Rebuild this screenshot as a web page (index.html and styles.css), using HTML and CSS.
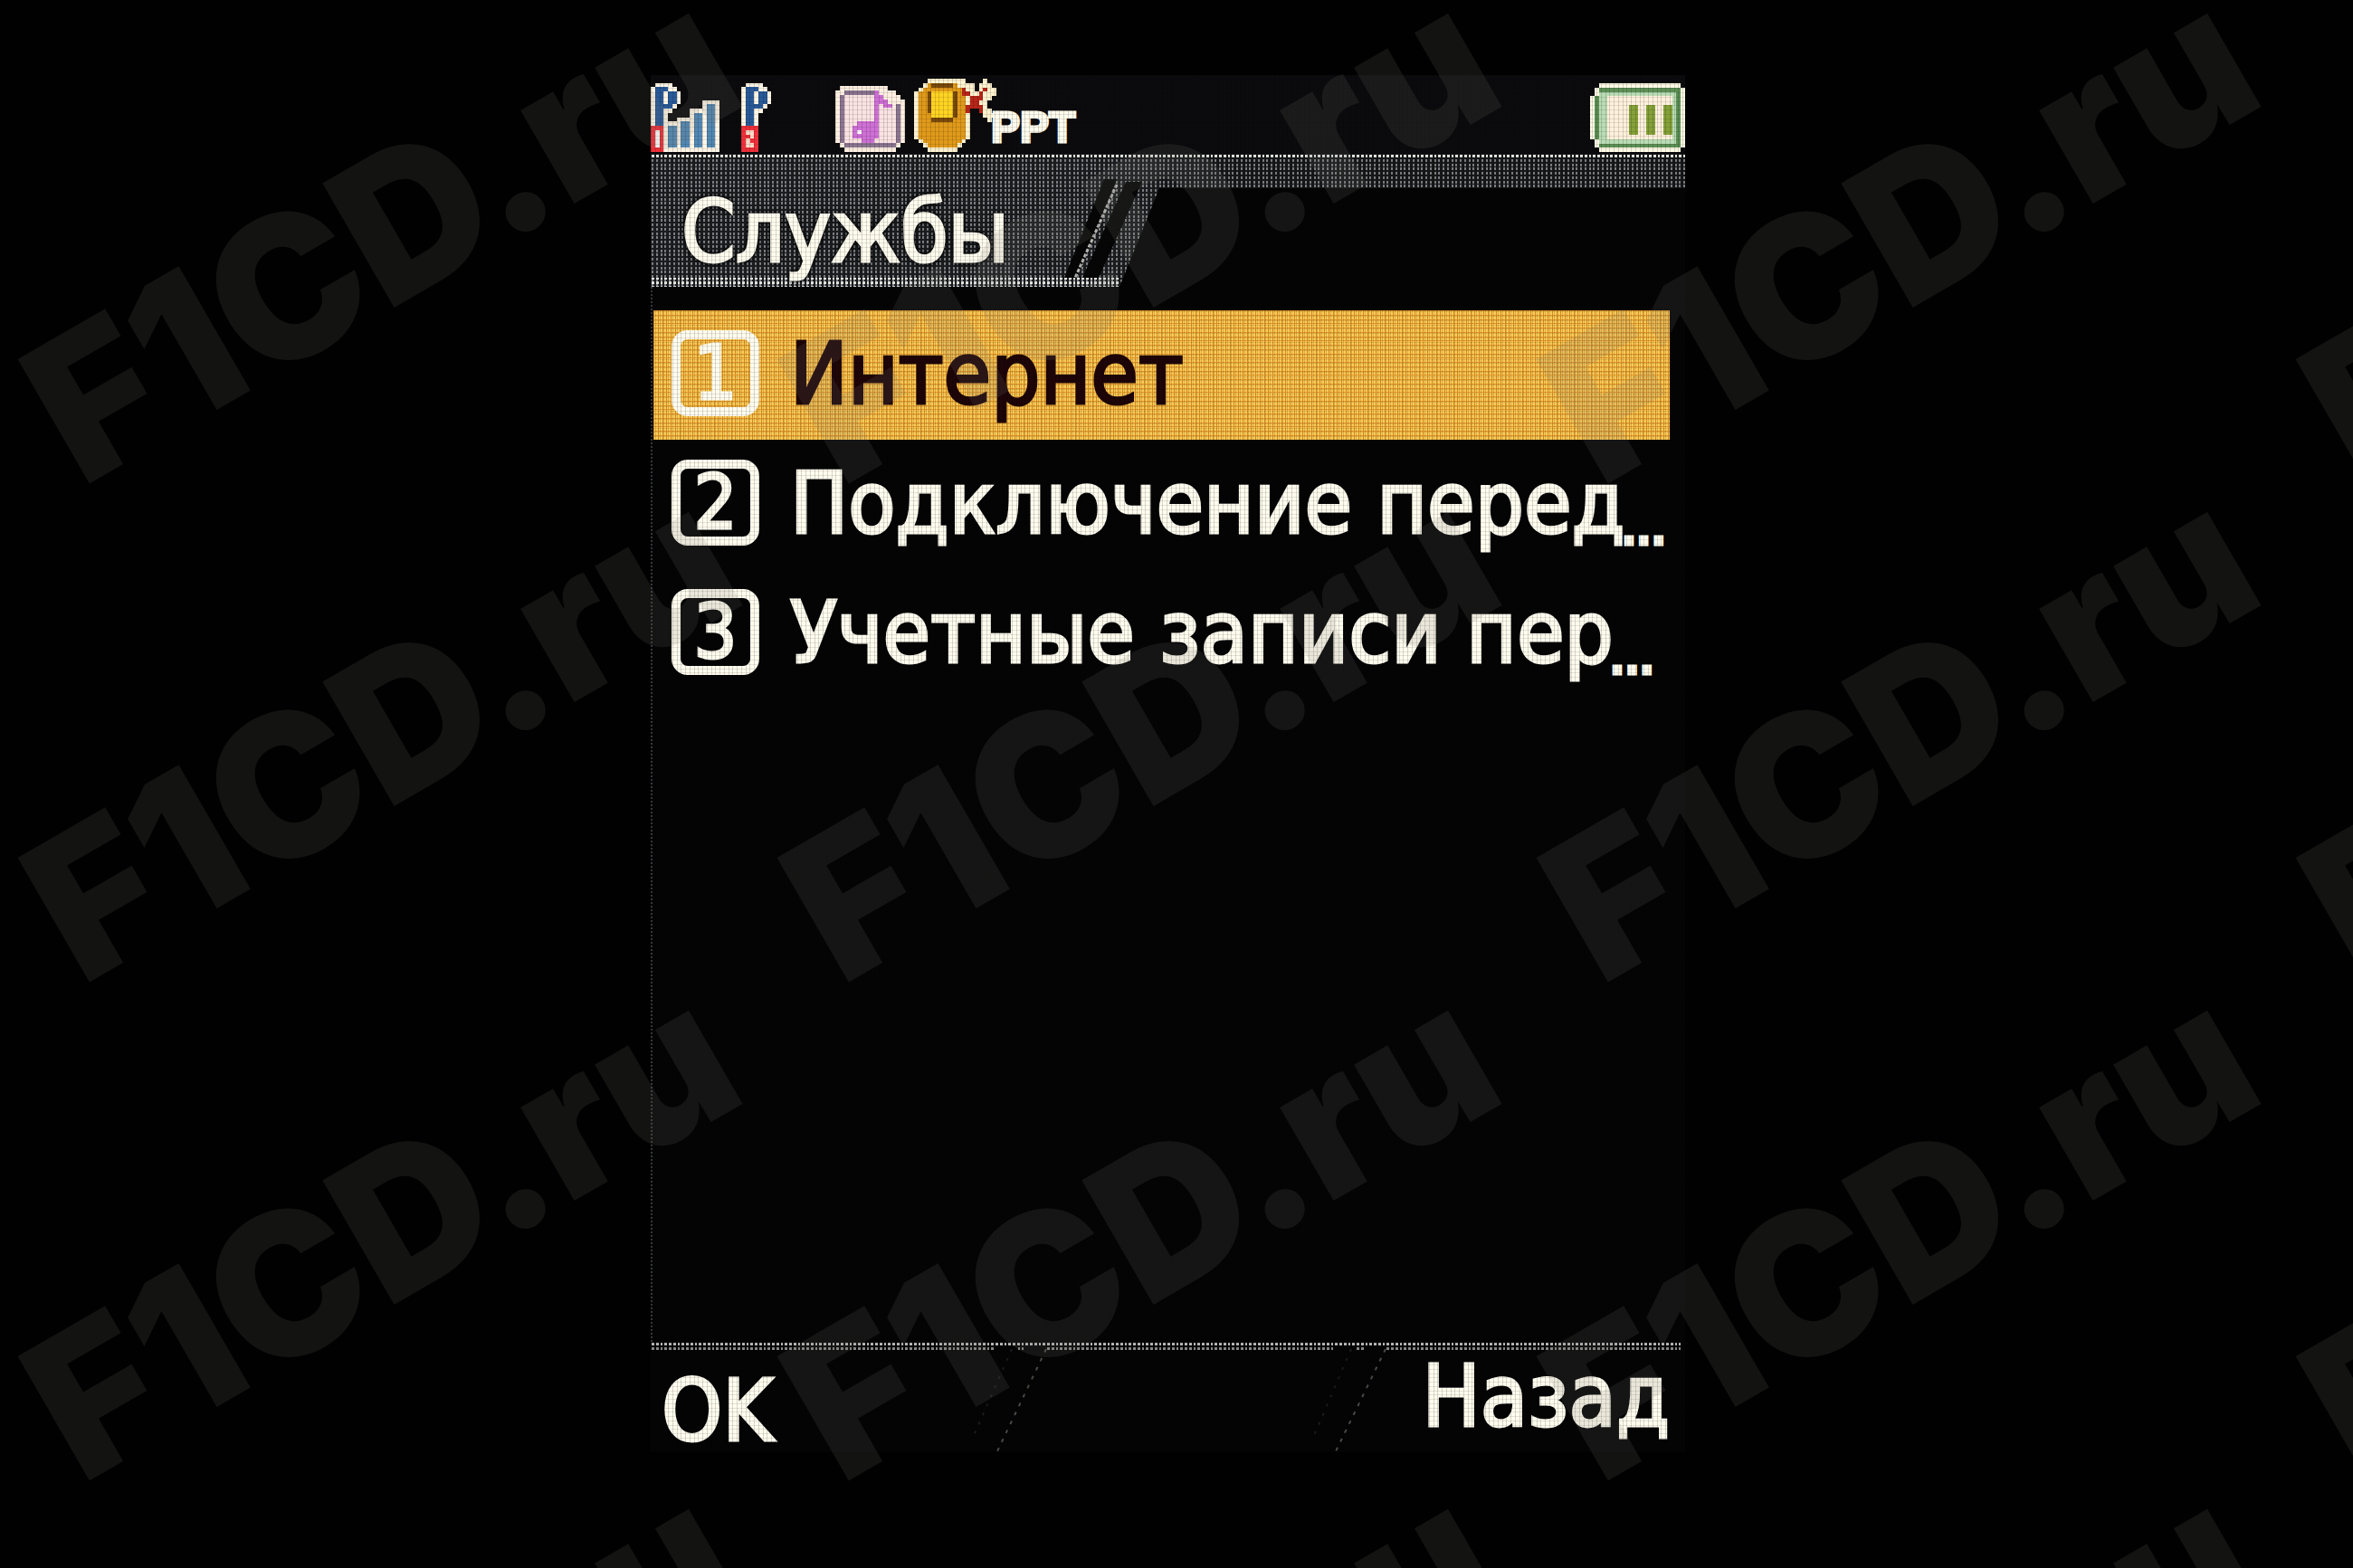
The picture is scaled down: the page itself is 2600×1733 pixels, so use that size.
FILE: index.html
```html
<!DOCTYPE html>
<html lang="ru">

<head>
  <meta charset="UTF-8">
  <meta name="viewport" content="width=device-width, initial-scale=1.0">
  <title>Службы</title>
  <link rel="stylesheet" href="styles.css">
</head>

<body>
  <main class="screen">
    <div class="status">
      <svg class="signal" viewBox="0 0 16 16" shape-rendering="crispEdges">
        <path fill="#fff6e6" d="M1 0h4v1h1v1h1v3h-1v1h-1v1h-1v3H0V1h1z" />
        <path fill="#2a5a98" d="M1 1h2v9H1zM3 1h1v1H3zM4 2h2v3H4zM3 5h2v1H3z" />
        <path fill="#fff6e6" d="M3 9h3V8h3V6h3V4h4v12H3z" />
        <path fill="#5288b4" d="M4 10h2v5H4zM7 9h2v6H7zM10 7h2v8h-2zM13 5h2v10h-2z" />
        <path fill="#f0303a" d="M0 10h3v6H0z" />
        <path fill="#fff" d="M1 11h1v4H1z" />
      </svg>
      <svg class="signal second" viewBox="0 0 16 16" shape-rendering="crispEdges">
        <path fill="#fff6e6" d="M1 0h4v1h1v1h1v3h-1v1h-1v1h-1v3H0V1h1z" />
        <path fill="#2a5a98" d="M1 1h2v9H1zM3 1h1v1H3zM4 2h2v3H4zM3 5h2v1H3z" />
        <path fill="#f0303a" d="M0 10h4v6H0z" />
        <path fill="#ffd9c8" d="M1 11h2v1H1zM2 12h1v1H2zM1 13h1v1H1zM1 14h2v1H1z" />
      </svg>
      <svg class="note" viewBox="0 0 16 15" shape-rendering="crispEdges">
        <path fill="#fff0e2" d="M1 0h11v1h2v1h1v1h1v10h-1v1h-1v1H2v-1H1v-1H0V1h1z" />
        <path fill="#8b7590" d="M2 1h8v1H2zM1 2h1v11H1zM2 13h12v1H2zM14 4h1v9h-1z" />
        <path fill="#fbe3e3" d="M2 2h9v11H2zM11 5h3v8h-3z" />
        <path fill="#cf70d6" d="M9 1h1v1h1v1h1v1h1v1h-2V4h-1v8H9v1H6v-1H4V9h1V8h4z" />
        <path fill="#fff" d="M5 10h1v1H5z" />
      </svg>
      <svg class="cam" viewBox="0 0 19 17" shape-rendering="crispEdges">
        <path fill="#fff3d0" d="M3 0h9v1h2v2h1V1h1V0h1v1h1v1h1v2h-1v1h-1v2h1v1h1v1h-1v1h-1V9h-1V8h-1V7h-2v7h-1v1h-1v1h-1v1H3v-1H2v-1H1v-1H0V3h1V2h1V1h1z" />
        <path fill="#e09a1a" d="M3 1h7v1h1v1h1v11h-1v1h-1v1H3v-1H2v-1H1V3h1V2h1z" />
        <path fill="#7a4a0a" d="M4 1h5v1H4zM3 3h1v5H3zM4 9h5v1H4zM9 3h1v6H9z" />
        <path fill="#ffd423" d="M4 3h5v6H4z" />
        <path fill="#b8261a" d="M11 2h1v1h1v1h2V3h1V2h1v1h-1v2h-1v1h1v2h-1V7h-2v1h-1V6h1V4h-2z" />
      </svg>
      <span class="ppt">PPT</span>
      <svg class="battery" viewBox="0 0 22 16" shape-rendering="crispEdges">
        <path fill="#fffbe6" d="M2 0h19v1h1v14h-1v1H2v-1H1v-2H0V3h1V1h1z" />
        <path fill="#5d8f56" d="M2 1h18v1H2zM1 3h1v10H1zM2 14h18v1H2zM20 1h1v14h-1z" />
        <path fill="#b9dcb4" d="M2 2h18v12H2z" />
        <path fill="#fff1dc" d="M4 3h15v10H4z" />
        <path fill="#84a038" d="M9 5h2v7H9zM13 5h2v7h-2zM17 5h2v7h-2z" />
      </svg>
    </div>

    <header class="title">
      <svg class="title-bg" aria-hidden="true">
        <defs>
          <pattern id="dots" width="19" height="19" patternUnits="userSpaceOnUse">
            <path fill="#a4a8ae" d="M1 1h2v3H1zM6 1h2v3H6zM11 1h2v3h-2zM15 1h2v3h-2zM1 6h2v3H1zM6 6h2v3H6zM11 6h2v3h-2zM15 6h2v3h-2zM1 11h2v3H1zM6 11h2v3H6zM11 11h2v3h-2zM15 11h2v3h-2zM1 15h2v3H1zM6 15h2v3H6zM11 15h2v3h-2zM15 15h2v3h-2z" />
          </pattern>
          <pattern id="line" width="19" height="5" patternUnits="userSpaceOnUse">
            <path fill="#e4e4e2" d="M1 1h3v3H1zM6 1h3v3H6zM11 1h2v3h-2zM15 1h3v3h-3z" />
          </pattern>
        </defs>
        <rect width="100%" height="38" fill="#161718" />
        <rect width="100%" height="38" fill="url(#dots)" opacity="0.7" />
        <path fill="#1c1d1f" d="M0 0H562V38L518 147H0z" />
        <path fill="url(#dots)" opacity="0.7" d="M0 0H562V38L518 147H0z" />
        <rect width="100%" height="5" fill="url(#line)" />
        <path fill="#060606" d="M501 28h14L471 137h-14zM525 31h18L495 137h-18z" />
        <path fill="none" stroke="#b8b8b4" stroke-width="3" stroke-dasharray="4 2" d="M515 34L469 137" />
        <rect y="137" width="518" height="10" fill="url(#line)" />
      </svg>
      <h1>Службы</h1>
    </header>

    <ol class="menu">
      <li><a class="active" href="#internet"><span class="num">1</span>Интернет</a></li>
      <li><a href="#data"><span class="num">2</span>Подключение перед<span class="more">...</span></a></li>
      <li><a href="#accounts"><span class="num">3</span>Учетные записи пер<span class="more">...</span></a></li>
    </ol>

    <footer class="softkeys">
      <svg class="softkeys-bg" aria-hidden="true">
        <rect width="1138" height="5" fill="url(#line)" opacity="0.8" />
        <path fill="url(#line)" opacity="0.6" d="M0 5h380v5H0zM406 5h8v5h-8zM438 5h316v5H438zM780 5h8v5h-8zM812 5h326v5H812z" />
        <path fill="none" stroke="#4a4a44" stroke-width="2" stroke-dasharray="4 7" d="M437 8L383 121M812 8L757 121" />
        <path fill="none" stroke="#1c1c20" stroke-width="2" stroke-dasharray="3 8" d="M399 8L355 108M774 8L731 108" />
      </svg>
      <button type="button" class="ok">OK</button>
      <button type="button">Назад</button>
    </footer>
  </main>

  <div class="watermark" aria-hidden="true">
    <span>F1CD.ru</span><span>F1CD.ru</span><span>F1CD.ru</span><span>F1CD.ru</span>
    <span>F1CD.ru</span><span>F1CD.ru</span><span>F1CD.ru</span><span>F1CD.ru</span>
    <span>F1CD.ru</span><span>F1CD.ru</span><span>F1CD.ru</span><span>F1CD.ru</span>
    <span>F1CD.ru</span><span>F1CD.ru</span><span>F1CD.ru</span><span>F1CD.ru</span>
  </div>
</body>

</html>
```
FILE: styles.css
```css
* {
  box-sizing: border-box;
}

body {
  position: relative;
  display: grid;
  grid-template-columns: minmax(0, 719fr) minmax(0, 1143fr) minmax(0, 738fr);
  min-height: 100vh;
  margin: 0;
  padding: 83px 0 128px;
  overflow: hidden;
  background: #010101;
  color: #fffcee;
  font-family: "DejaVu Sans Condensed", "DejaVu Sans", sans-serif;
  font-size: 95px;
}

.screen {
  position: relative;
  grid-column: 2;
  display: flex;
  flex-direction: column;
  background: #040405;
  -webkit-text-stroke: 3px currentColor;
}

/* lcd cell grid over everything on the screen */
.screen::after {
  content: "";
  position: absolute;
  inset: 0;
  pointer-events: none;
  background-image:
    repeating-linear-gradient(90deg, rgba(0, 0, 0, 0.15) 0 1px, transparent 1px 5px, rgba(0, 0, 0, 0.15) 5px 6px, transparent 6px 10px, rgba(0, 0, 0, 0.15) 10px 11px, transparent 11px 14px, rgba(0, 0, 0, 0.15) 14px 15px, transparent 15px 19px),
    repeating-linear-gradient(rgba(0, 0, 0, 0.1) 0 1px, transparent 1px 5px, rgba(0, 0, 0, 0.1) 5px 6px, transparent 6px 10px, rgba(0, 0, 0, 0.1) 10px 11px, transparent 11px 14px, rgba(0, 0, 0, 0.1) 14px 15px, transparent 15px 19px);
}

.status {
  display: flex;
  align-items: flex-end;
  height: 87px;
  padding-bottom: 2px;
  background: #0b0b0d;
}

.status svg {
  flex: none;
}

.signal {
  width: 76px;
  height: 77px;
}

.second {
  margin-left: 24px;
}

.note {
  width: 77px;
  height: 73px;
  margin-left: 28px;
}

.cam {
  width: 91px;
  height: 81px;
  margin-left: 10px;
}

.ppt {
  margin-left: -6px;
  font-family: "Liberation Sans", sans-serif;
  font-size: 48px;
  font-weight: bold;
  line-height: 54px;
}

.battery {
  width: 105px;
  height: 76px;
  margin-left: auto;
}

.title {
  position: relative;
  height: 147px;
}

.title-bg,
.softkeys-bg {
  position: absolute;
  top: 0;
  left: 0;
  width: 100%;
  height: 100%;
}

.title h1 {
  position: relative;
  margin: 0;
  padding-left: 34px;
  font-size: 95px;
  font-weight: normal;
  line-height: 172px;
  text-shadow: 0 0 6px #000, 0 0 6px #000, 0 0 6px #000;
}

.menu {
  flex: 1;
  margin: 0;
  padding: 26px 17px 0 1px;
  border-left: 2px dotted #3a3d40;
  list-style: none;
}

.menu a {
  display: flex;
  align-items: center;
  height: 143px;
  padding: 0 0 4px 20px;
  color: inherit;
  text-decoration: none;
  white-space: nowrap;
}

.menu .active {
  background-color: #fecc58;
  background-image:
    repeating-linear-gradient(90deg, #d08a20 0 1px, transparent 1px 5px, #d08a20 5px 6px, transparent 6px 10px, #d08a20 10px 11px, transparent 11px 14px, #d08a20 14px 15px, transparent 15px 19px),
    repeating-linear-gradient(#e09428 0 1px, transparent 1px 5px, #e09428 5px 6px, transparent 6px 10px, #e09428 10px 11px, transparent 11px 14px, #e09428 14px 15px, transparent 15px 19px);
  color: #1e0508;
}

.num {
  display: flex;
  flex: none;
  align-items: center;
  justify-content: center;
  width: 97px;
  height: 95px;
  margin-right: 34px;
  border: 10px solid #fffcee;
  border-radius: 18px;
  color: #fffcee;
  font-size: 84px;
  line-height: 75px;
}

.more {
  align-self: flex-end;
  margin: 0 0 14px -4px;
  font-size: 48px;
  font-weight: bold;
  line-height: 52px;
}

.softkeys {
  position: relative;
  display: flex;
  align-items: flex-start;
  justify-content: space-between;
  height: 122px;
  padding: 0 17px 0 12px;
}

.softkeys button {
  position: relative;
  padding: 0;
  border: 0;
  background: none;
  color: inherit;
  font: inherit;
  line-height: 120px;
  -webkit-text-stroke: inherit;
}

.softkeys .ok {
  padding-top: 16px;
}

.watermark {
  position: absolute;
  inset: 0;
  display: grid;
  grid-template-columns: repeat(4, 839px);
  grid-auto-rows: 551px;
  padding-left: 88px;
  overflow: hidden;
  pointer-events: none;
  opacity: 0.15;
  color: #78786f;
  font-family: Inter, sans-serif;
  font-size: 218px;
  font-weight: 900;
  line-height: 226px;
}

.watermark span {
  align-self: start;
  justify-self: start;
  margin-top: 348px;
  transform: rotate(-30deg);
  transform-origin: 0 188px;
}
```
